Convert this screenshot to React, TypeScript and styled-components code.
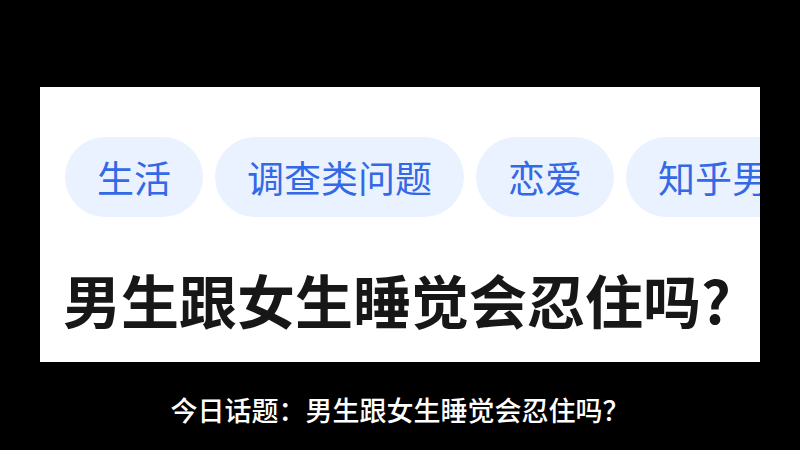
import * as React from 'react'
import styled, { createGlobalStyle } from 'styled-components'

const tags = ['生活', '调查类问题', '恋爱', '知乎男生']

const App = () => (
    <>
        <GlobalStyle />
        <Frame>
            <Card>
                <TagRow>
                    {tags.map(tag => (
                        <Tag key={tag}>{tag}</Tag>
                    ))}
                </TagRow>
                <Title>男生跟女生睡觉会忍住吗?</Title>
            </Card>
            <Caption>今日话题：男生跟女生睡觉会忍住吗？</Caption>
        </Frame>
    </>
)

export default App

const GlobalStyle = createGlobalStyle`
    html, body {
        margin: 0;
        padding: 0;
        background: #000;
    }
    body {
        font-family: "Noto Sans CJK SC", "Noto Sans", sans-serif;
    }
`

const Frame = styled.div`
    width: 800px;
    height: 450px;
    background: #000;
    padding-top: 87px;
    box-sizing: border-box;
    display: flex;
    flex-direction: column;
    align-items: center;
    overflow: hidden;
`

const Card = styled.div`
    width: 720px;
    height: 275px;
    background: #fff;
    box-sizing: border-box;
    padding: 50px 0 0 25px;
    overflow: hidden;
    display: flex;
    flex-direction: column;
`

const TagRow = styled.div`
    display: flex;
    gap: 12px;
    white-space: nowrap;
`

const Tag = styled.span`
    flex: none;
    height: 80px;
    padding: 0 32px;
    border-radius: 40px;
    background: #ebf2ff;
    color: #3469e6;
    font-size: 37px;
    line-height: 80px;
`

const Title = styled.h1`
    margin: 47px 0 0 -2px;
    font-size: 58px;
    line-height: 70px;
    font-weight: 700;
    color: #171717;
    white-space: nowrap;
`

const Caption = styled.div`
    margin-top: 29px;
    color: #fff;
    font-size: 27px;
    line-height: 38px;
    font-weight: 500;
`
